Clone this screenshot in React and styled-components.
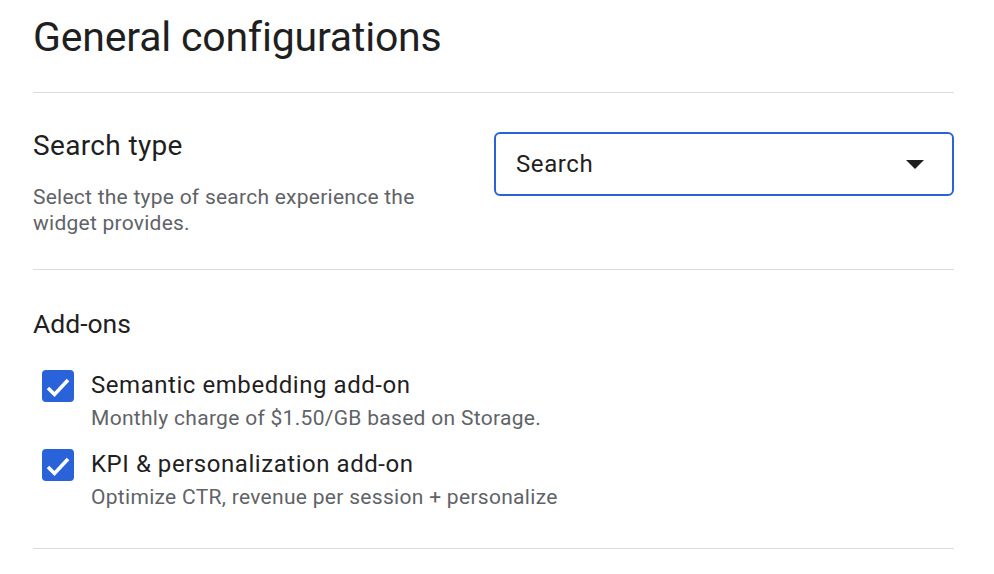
import React from "react";
import styled, { createGlobalStyle } from "styled-components";

const GlobalStyle = createGlobalStyle`
  body {
    margin: 0;
    background: #fff;
    font-family: Roboto, "Liberation Sans", Arial, sans-serif;
    color: #1f1f1f;
  }
`;

const Page = styled.div`
  width: 921px;
  padding: 0 40px 0 33px;
`;

const Title = styled.h1`
  margin: 0;
  padding: 13px 0 31px;
  font-size: 41px;
  line-height: 48px;
  font-weight: 400;
  letter-spacing: -0.2px;
  color: #1f1f1f;
`;

const Divider = styled.div`
  height: 1px;
  background: #dadce0;
`;

const Section = styled.section`
  padding: ${(p) => p.$top}px 0 ${(p) => p.$bottom}px;
`;

const Row = styled.div`
  display: flex;
  justify-content: space-between;
  align-items: flex-start;
`;

const Info = styled.div`
  max-width: 420px;
`;

const Heading = styled.h2`
  margin: 0;
  font-size: ${(p) => p.$size}px;
  line-height: ${(p) => p.$lh}px;
  letter-spacing: ${(p) => p.$ls || 0}px;
  font-weight: 400;
  color: #1f1f1f;
`;

const Description = styled.p`
  margin: 20px 0 0;
  font-size: 21px;
  line-height: 26px;
  letter-spacing: 0.25px;
  color: #5f6368;
`;

const Select = styled.div`
  box-sizing: border-box;
  width: 460px;
  height: 64px;
  margin-top: 4px;
  border: 2px solid #2a63d9;
  border-radius: 6px;
  padding: 0 28px 0 20px;
  display: flex;
  align-items: center;
  justify-content: space-between;
  font-size: 24px;
  letter-spacing: 0.6px;
  color: #1f1f1f;
`;

const List = styled.div`
  margin-top: 28px;
  padding-left: 9px;
  display: flex;
  flex-direction: column;
  gap: 13px;
`;

const Option = styled.label`
  display: flex;
  align-items: flex-start;
  gap: 17px;
`;

const Box = styled.span`
  flex: none;
  width: 32px;
  height: 32px;
  margin-top: 1px;
  border-radius: 4px;
  background: #2a63d9;
  display: flex;
`;

const Label = styled.div`
  font-size: 24px;
  line-height: 32px;
  letter-spacing: 0.55px;
  color: #1f1f1f;
`;

const Hint = styled.div`
  font-size: 21px;
  line-height: 34px;
  letter-spacing: 0.3px;
  color: #5f6368;
`;

const addons = [
  { title: "Semantic embedding add-on", hint: "Monthly charge of $1.50/GB based on Storage." },
  { title: "KPI & personalization add-on", hint: "Optimize CTR, revenue per session + personalize" },
];

function Check() {
  return (
    <Box>
      <svg width="32" height="32" viewBox="0 0 32 32">
        <polyline points="6,18 12.5,24.5 26,10" fill="none" stroke="#fff" strokeWidth="3.6" />
      </svg>
    </Box>
  );
}

export default function App() {
  return (
    <>
      <GlobalStyle />
      <Page>
        <Title>General configurations</Title>
        <Divider />
        <Section $top={35} $bottom={33}>
          <Row>
            <Info>
              <Heading $size={28} $lh={36} $ls={0.35}>Search type</Heading>
              <Description>Select the type of search experience the widget provides.</Description>
            </Info>
            <Select>
              <span>Search</span>
              <svg width="18" height="9" viewBox="0 0 18 9">
                <polygon points="0,0 18,0 9,9" fill="#1f1f1f" />
              </svg>
            </Select>
          </Row>
        </Section>
        <Divider />
        <Section $top={37} $bottom={34}>
          <Heading $size={26.5} $lh={34}>Add-ons</Heading>
          <List>
            {addons.map((a) => (
              <Option key={a.title}>
                <Check />
                <div>
                  <Label>{a.title}</Label>
                  <Hint>{a.hint}</Hint>
                </div>
              </Option>
            ))}
          </List>
        </Section>
        <Divider />
      </Page>
    </>
  );
}
